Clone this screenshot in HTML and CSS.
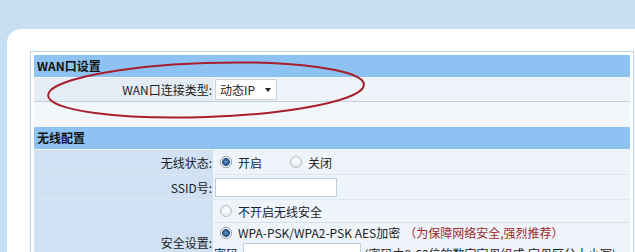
FILE: index.html
```html
<!DOCTYPE html>
<html lang="zh-CN">
<head>
    <meta charset="UTF-8">
    <meta name="viewport" content="width=device-width, initial-scale=1.0">
    <title>无线路由器设置</title>
    <link rel="stylesheet" href="styles.css">
</head>
<body>
    <div class="panel">
        <div class="cfg">
            <!-- WAN口 -->
            <div class="head">WAN口设置</div>
            <div class="row row-wan">
                <div class="label">WAN口连接类型:</div>
                <div class="value">
                    <span class="select">动态IP<i class="caret"></i></span>
                </div>
            </div>
            <div class="blank"></div>

            <!-- 无线 -->
            <div class="head">无线配置</div>
            <div class="row">
                <div class="label">无线状态:</div>
                <div class="value">
                    <label class="opt"><input type="radio" name="wl" checked> 开启</label>
                    <label class="opt opt-off"><input type="radio" name="wl"> 关闭</label>
                </div>
            </div>
            <div class="row">
                <div class="label">SSID号:</div>
                <div class="value">
                    <input type="text" class="field">
                </div>
            </div>
            <div class="row row-sec">
                <div class="label">安全设置:</div>
                <div class="value sec-list">
                    <div class="sec-item">
                        <label class="opt"><input type="radio" name="sec"> 不开启无线安全</label>
                    </div>
                    <div class="sec-item sec-wpa">
                        <label class="opt"><input type="radio" name="sec" checked> WPA-PSK/WPA2-PSK AES加密 <span class="tip">（为保障网络安全,强烈推荐）</span></label>
                        <div class="pwd">
                            密码:<input type="text" class="field field-pwd"><span class="hint">(密码由8-63位的数字字母组成,字母区分大小写)</span>
                        </div>
                    </div>
                </div>
            </div>
        </div>
    </div>

    <!-- 红色圈注 -->
    <svg class="mark" width="635" height="252" viewBox="0 0 635 252">
        <ellipse cx="206" cy="90" rx="158" ry="27" transform="rotate(-2 206 90)" fill="none" stroke="#a81f2c" stroke-width="2"/>
    </svg>
</body>
</html>
```

FILE: styles.css
```css
* {
    box-sizing: border-box;
    margin: 0;
    padding: 0;
}

body {
    background: #c6dff2;
    font-family: "Noto Sans CJK SC", "Liberation Sans", sans-serif;
    font-size: 12px;
    color: #222;
    overflow: hidden;
}

.panel {
    margin: 29px 0 0 7px;
    padding: 22px 0 40px 23px;
    background: #fff;
    border-top-left-radius: 14px;
    min-height: 240px;
}

.cfg {
    width: 604px;
    border: 1px solid #bfd3e3;
    padding: 3px;
}

.head {
    height: 23px;
    line-height: 22px;
    padding-left: 3px;
    background: #8ec2f3;
    border-bottom: 1px solid #f4f8fc;
    font-weight: bold;
    color: #111;
}

.row {
    display: flex;
    height: 25px;
    border-bottom: 1px solid #dbe6f0;
}

.row-wan {
    height: 24px;
    border-bottom-color: #c3d1dd;
}

.label {
    width: 180px;
    flex: none;
    display: flex;
    align-items: center;
    justify-content: flex-end;
    background: #cfe1f2;
    border-right: 1px solid #f2f7fb;
    padding-right: 1px;
}

.row-wan .label {
    background: #e4edf6;
}

.value {
    flex: 1;
    display: flex;
    align-items: center;
    background: #eef4fa;
}

.blank {
    height: 25px;
    background: #f2f7fc;
}

.select {
    display: flex;
    align-items: center;
    width: 62px;
    height: 21px;
    margin-left: 1px;
    padding-left: 4px;
    background: #fff;
    border: 1px solid #c5d1dc;
}

.caret {
    margin-left: auto;
    margin-right: 5px;
    border-left: 3px solid transparent;
    border-right: 3px solid transparent;
    border-top: 4px solid #222;
}

.opt {
    display: flex;
    align-items: center;
}

.opt input {
    appearance: none;
    width: 12px;
    height: 12px;
    margin: 0 6px 0 6px;
    border: 1px solid #b4bcc4;
    border-radius: 50%;
    background: radial-gradient(circle at 50% 40%, #fff 0, #e6e9ec 80%);
}

.opt input:checked {
    border-color: #8e9aa6;
    background: radial-gradient(circle, #6f9cc8 0, #2e5f92 2.5px, #1f4670 3.5px, #fff 4.2px, #e4e8ec 100%);
}

.opt-off {
    margin-left: 22px;
}

.field {
    width: 122px;
    height: 19px;
    margin-left: 1px;
    border: 1px solid #bcd0e2;
    background: #fff;
}

.row-sec {
    height: 84px;
    border-bottom: none;
}

.sec-list {
    flex-direction: column;
    align-items: stretch;
}

.sec-item {
    height: 23px;
    display: flex;
    align-items: center;
    border-bottom: 1px solid #d4e0ea;
}

.sec-wpa {
    height: auto;
    flex: 1;
    flex-direction: column;
    align-items: stretch;
    border-bottom: none;
    padding-top: 1px;
}

.sec-wpa .opt {
    height: 17px;
}

.tip {
    color: #a0282c;
    margin-left: 4px;
}

.pwd {
    display: flex;
    align-items: center;
    margin-top: 2px;
    height: 20px;
}

.field-pwd {
    width: 118px;
    height: 20px;
    margin-left: 2px;
}

.hint {
    margin-left: 3px;
}

.mark {
    position: absolute;
    left: 0;
    top: 0;
    pointer-events: none;
}
```
